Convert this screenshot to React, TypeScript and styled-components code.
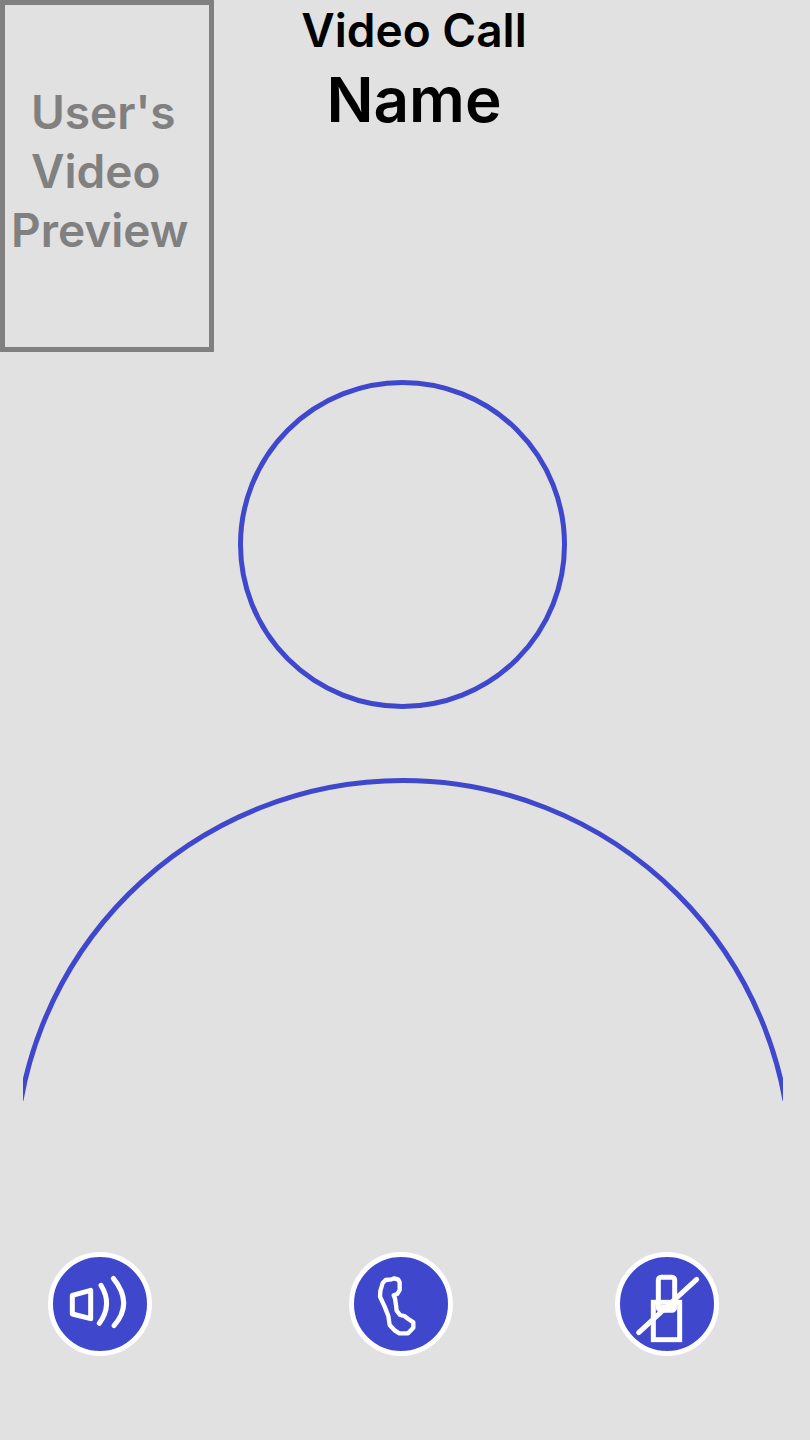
import React from "react";
import styled, { createGlobalStyle } from "styled-components";

const GlobalStyle = createGlobalStyle`
  * {
    box-sizing: border-box;
  }

  body {
    margin: 0;
    background: #e1e1e1;
    color: #000;
    font-family: Inter, "Liberation Sans", sans-serif;
    font-weight: 600;
  }
`;

const Screen = styled.main`
  display: flex;
  flex-direction: column;
  min-height: 100vh;
`;

const Header = styled.header`
  display: grid;
  grid-template-columns: 214px 1fr 196px;
  align-items: start;
`;

const Preview = styled.section`
  display: flex;
  flex-direction: column;
  height: 352px;
  padding: 78px 0 0 6px;
  border: 5px solid #808080;
  color: #808080;
  font-size: 46px;
  line-height: 59px;
`;

const PreviewLine = styled.span<{ $indented?: boolean }>`
  padding-left: ${(p) => (p.$indented ? 20 : 0)}px;
`;

const Titles = styled.div`
  text-align: center;
`;

const ScreenTitle = styled.h1`
  margin: 0;
  font-size: 46px;
  font-weight: 600;
  line-height: 60px;
`;

const CallerName = styled.h2`
  margin: 0;
  font-size: 62px;
  font-weight: 600;
  line-height: 80px;
`;

const Stage = styled.section`
  padding: 28px 27px 0 23px;
`;

const Person = styled.svg`
  display: block;
  width: 100%;
  height: auto;
`;

const Controls = styled.footer`
  display: grid;
  grid-template-columns: 301fr 266fr 104px;
  padding: 151px 91px 84px 48px;
`;

const RoundButton = styled.button`
  width: 104px;
  height: 104px;
  padding: 0;
  border: 5px solid #fff;
  border-radius: 50%;
  background: #3f48cc;
  cursor: pointer;
`;

const Icon = styled.svg`
  display: block;
  width: 94px;
  height: 94px;
  fill: none;
  stroke: #fff;
`;

export default function App() {
  return (
    <>
      <GlobalStyle />
      <Screen>
        <Header>
          <Preview>
            <PreviewLine $indented>User's</PreviewLine>
            <PreviewLine $indented>Video</PreviewLine>
            <PreviewLine>Preview</PreviewLine>
          </Preview>
          <Titles>
            <ScreenTitle>Video Call</ScreenTitle>
            <CallerName>Name</CallerName>
          </Titles>
        </Header>

        <Stage>
          <Person viewBox="0 0 760 721" fill="none" stroke="#3f48cc" strokeWidth="5" aria-hidden="true">
            <circle cx="379.5" cy="164.5" r="162" />
            <circle cx="380" cy="788.5" r="388" />
          </Person>
        </Stage>

        <Controls>
          <RoundButton type="button" aria-label="Speaker">
            <Icon viewBox="39 36 282 282" strokeWidth="15" strokeLinecap="round" aria-hidden="true">
              <path d="M97 151L152 136V221L97 207Z" strokeLinejoin="round" />
              <path d="M183 121Q219 178 178 235" />
              <path d="M220 100Q281 175 222 242" />
            </Icon>
          </RoundButton>
          <RoundButton type="button" aria-label="End call">
            <Icon viewBox="42 36 282 282" strokeWidth="13" strokeLinejoin="round" aria-hidden="true">
              <path d="M128 114L137 105L155 103L163 100L175 104L179 112V135L172 147L161 151L165 160L168 180L170 197L180 210L193 213L205 222L220 232V248L204 265H178L165 257L149 240L145 213L134 185L120 155L121 138Z" />
            </Icon>
          </RoundButton>
          <RoundButton type="button" aria-label="Turn camera off">
            <Icon viewBox="39 51 282 282" strokeWidth="15" aria-hidden="true">
              <rect x="154" y="112" width="49" height="99" rx="8" />
              <rect x="139" y="187" width="79" height="112" />
              <path d="M95 278L269 118" strokeLinecap="round" />
              <path d="M160 201H174M184 202H204" strokeWidth="12" />
            </Icon>
          </RoundButton>
        </Controls>
      </Screen>
    </>
  );
}
